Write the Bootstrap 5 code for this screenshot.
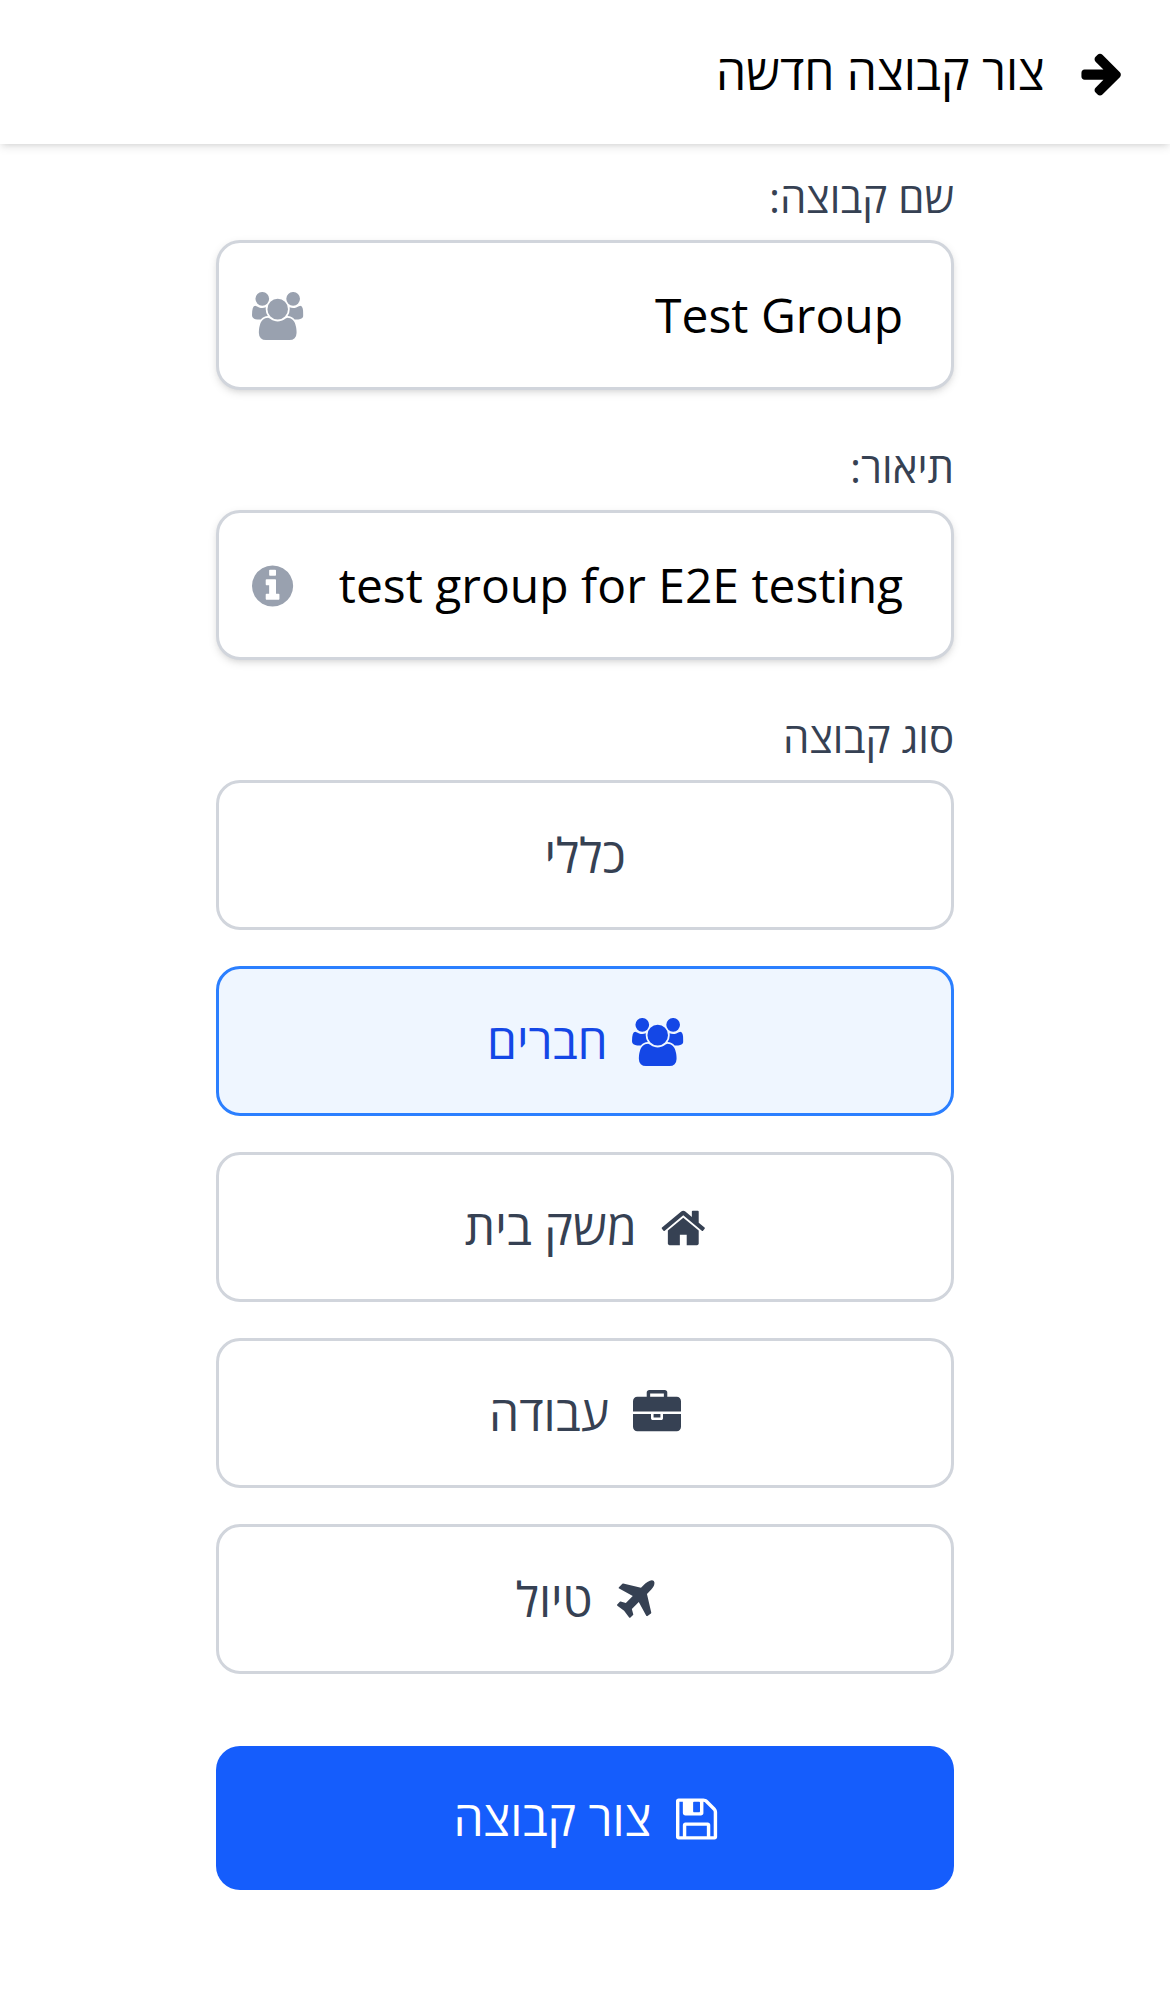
<!DOCTYPE html>
<html lang="he" dir="rtl">
<head>
<meta charset="utf-8">
<meta name="viewport" content="width=device-width, initial-scale=1">
<title>צור קבוצה חדשה</title>
<link rel="stylesheet" href="https://cdn.jsdelivr.net/npm/bootstrap@5.3.0/dist/css/bootstrap.min.css">
<style>
  body { font-family: "Open Sans", "Noto Sans", sans-serif; font-size: 48px; line-height: 72px; color: #000; background: #fff; }
  .app-header { height: 144px; padding: 0 48px; gap: 36px; box-shadow: 0 3px 9px rgba(0,0,0,.1), 0 3px 6px -3px rgba(0,0,0,.1); }
  .app-title { font-size: 48px; line-height: 72px; }
  .glyph { height: 48px; width: auto; fill: currentColor; flex: none; display: block; overflow: visible; }
  .group-form { width: 63.1%; padding: 24px 0 96px; }
  .field-block { margin-bottom: 48px; }
  .field-label { display: block; margin: 0 0 14px; font-size: 42px; line-height: 58px; color: #364153; }
  .field-box { height: 150px; border: 3px solid #d1d5dc; border-radius: 24px; padding: 0 48px 2px 120px; font-size: 48px; color: #000; box-shadow: 0 3px 9px rgba(0,0,0,.1), 0 3px 6px -3px rgba(0,0,0,.1); }
  .field-icon { position: absolute; left: 36px; top: 51px; color: #99a1af; }
  .kind { height: 150px; border: 3px solid #d1d5dc; border-radius: 24px; gap: 24px; color: #364153; cursor: pointer; }
  .btn-check:checked + .kind { border-color: #2b7fff; background: #eff6ff; color: #1447e6; }
  .kinds { gap: 36px; margin-bottom: 72px; }
  .submit-btn { height: 144px; border: 0; border-radius: 24px; gap: 24px; font-size: 48px; background: #155dfc; color: #fff; }
  .submit-btn:hover { background: #1447e6; color: #fff; }
</style>
</head>
<body>
<svg class="d-none" aria-hidden="true">
  <symbol id="i-users" viewBox="0 0 1920 1792"><path d="M593 896q-162 5-265 128h-134q-82 0-138-40.500t-56-118.500q0-353 124-353 6 0 43.500 21t97.500 42.500 119 21.500q67 0 133-23-5 37-5 66 0 139 81 256zm1071 637q0 120-73 189.500t-194 69.500h-874q-121 0-194-69.500t-73-189.500q0-53 3.500-103.500t14-109 26.500-108.500 43-97.500 62-81 85.500-53.500 111.500-20q10 0 43 21.500t73 48 107 48 135 21.500 135-21.500 107-48 73-48 43-21.500q61 0 111.500 20t85.500 53.500 62 81 43 97.500 26.500 108.500 14 109 3.500 103.500zm-1024-1277q0 106-75 181t-181 75-181-75-75-181 75-181 181-75 181 75 75 181zm704 384q0 159-112.500 271.500t-271.500 112.500-271.500-112.500-112.500-271.500 112.500-271.500 271.500-112.500 271.500 112.500 112.500 271.500zm576 225q0 78-56 118.500t-138 40.500h-134q-103-123-265-128 81-117 81-256 0-29-5-66 66 23 133 23 59 0 119-21.500t97.500-42.500 43.500-21q124 0 124 353zm-128-609q0 106-75 181t-181 75-181-75-75-181 75-181 181-75 181 75 75 181z"/></symbol>
</svg>

<header class="app-header d-flex align-items-center bg-white">
  <a href="#" class="text-reset" aria-label="חזרה"><svg class="glyph" viewBox="112 -37 1536 1792"><path d="M1600 960q0 54-37 91l-651 651q-39 37-91 37-51 0-90-37l-75-75q-38-38-38-91t38-91l293-293h-704q-52 0-84.500-37.500t-32.500-90.500v-128q0-53 32.500-90.500t84.500-37.500h704l-293-294q-38-36-38-90t38-90l75-75q38-38 90-38 53 0 91 38l651 651q37 35 37 90z"/></svg></a>
  <h1 class="app-title m-0 fw-normal">צור קבוצה חדשה</h1>
</header>

<form class="group-form mx-auto">
  <div class="field-block">
    <label class="field-label" for="g-name">שם קבוצה:</label>
    <div class="position-relative">
      <input id="g-name" type="text" class="form-control field-box" value="Test Group">
      <svg class="glyph field-icon" viewBox="0 -37 1920 1792"><use href="#i-users" width="1920" height="1792"/></svg>
    </div>
  </div>
  <div class="field-block">
    <label class="field-label" for="g-desc">תיאור:</label>
    <div class="position-relative">
      <input id="g-desc" type="text" class="form-control field-box" value="test group for E2E testing">
      <svg class="glyph field-icon" viewBox="128 -37 1536 1792"><path d="M1152 1376v-160q0-14-9-23t-23-9h-96v-512q0-14-9-23t-23-9h-320q-14 0-23 9t-9 23v160q0 14 9 23t23 9h96v320h-96q-14 0-23 9t-9 23v160q0 14 9 23t23 9h448q14 0 23-9t9-23zm-128-896v-160q0-14-9-23t-23-9h-192q-14 0-23 9t-9 23v160q0 14 9 23t23 9h192q14 0 23-9t9-23zm640 416q0 209-103 385.500t-279.500 279.500-385.500 103-385.500-103-279.500-279.500-103-385.500 103-385.500 279.500-279.500 385.500-103 385.500 103 279.500 279.500 103 385.500z"/></svg>
    </div>
  </div>
  <fieldset>
    <legend class="field-label">סוג קבוצה</legend>
    <div class="kinds d-flex flex-column">
      <div>
        <input class="btn-check" type="radio" name="kind" id="k-general">
        <label class="kind d-flex align-items-center justify-content-center" for="k-general">כללי</label>
      </div>
      <div>
        <input class="btn-check" type="radio" name="kind" id="k-friends" checked>
        <label class="kind d-flex align-items-center justify-content-center" for="k-friends"><svg class="glyph" viewBox="0 -37 1920 1792"><use href="#i-users" width="1920" height="1792"/></svg>חברים</label>
      </div>
      <div>
        <input class="btn-check" type="radio" name="kind" id="k-home">
        <label class="kind d-flex align-items-center justify-content-center" for="k-home"><svg class="glyph" viewBox="64 -37 1664 1792"><path d="M1472 992v480q0 26-19 45t-45 19h-384v-384h-256v384h-384q-26 0-45-19t-19-45v-480q0-1 .5-3t.5-3l575-474 575 474q1 2 1 6zm223-69l-62 74q-8 9-21 11h-3q-13 0-21-7l-692-577-692 577q-12 8-24 7-13-2-21-11l-62-74q-8-10-7-23.500t11-21.500l719-599q32-26 76-26t76 26l244 204v-195q0-14 9-23t23-9h192q14 0 23 9t9 23v408l219 182q10 8 11 21.500t-7 23.500z"/></svg>משק בית</label>
      </div>
      <div>
        <input class="btn-check" type="radio" name="kind" id="k-work">
        <label class="kind d-flex align-items-center justify-content-center" for="k-work"><svg class="glyph" viewBox="0 -37 1792 1792"><path d="M640 256h512v-128h-512v128zm1152 640v480q0 66-47 113t-113 47h-1472q-66 0-113-47t-47-113v-480h672v160q0 26 19 45t45 19h320q26 0 45-19t19-45v-160h672zm-768 0v128h-256v-128h256zm768-480v384h-1792v-384q0-66 47-113t113-47h352v-160q0-40 28-68t68-28h576q40 0 68 28t28 68v160h352q66 0 113 47t47 113z"/></svg>עבודה</label>
      </div>
      <div>
        <input class="btn-check" type="radio" name="kind" id="k-trip">
        <label class="kind d-flex align-items-center justify-content-center" for="k-trip"><svg class="glyph" viewBox="192 0 1408 1792"><path d="M1568 224q44 52 12 148t-108 172l-161 161 160 696q5 19-12 33l-128 96q-7 6-19 6-4 0-7-1-15-3-21-16l-279-508-259 259 53 194q5 17-8 31l-96 96q-9 9-23 9h-2q-15-2-24-13l-189-252-252-189q-11-7-13-23-1-13 9-25l96-97q9-9 23-9 6 0 8 1l194 53 259-259-508-279q-14-8-17-24-2-16 9-27l128-128q14-13 30-8l665 159 160-160q76-76 172-108t148 12z"/></svg>טיול</label>
      </div>
    </div>
  </fieldset>
  <button type="submit" class="btn submit-btn w-100 d-flex align-items-center justify-content-center"><svg class="glyph" viewBox="91 -37 1536 1792"><path d="M512 1536h768v-384h-768v384zm896 0h128v-896q0-14-10-38.500t-20-34.500l-281-281q-10-10-34-20t-39-10v416q0 40-28 68t-68 28h-576q-40 0-68-28t-28-68v-416h-128v1280h128v-416q0-40 28-68t68-28h832q40 0 68 28t28 68v416zm-384-928v-320q0-13-9.500-22.500t-22.500-9.500h-192q-13 0-22.500 9.500t-9.500 22.500v320q0 13 9.500 22.500t22.500 9.500h192q13 0 22.500-9.500t9.500-22.500zm640 32v928q0 40-28 68t-68 28h-1344q-40 0-68-28t-28-68v-1344q0-40 28-68t68-28h928q40 0 88 20t76 48l280 280q28 28 48 76t20 88z"/></svg>צור קבוצה</button>
</form>
<script src="https://cdn.jsdelivr.net/npm/bootstrap@5.3.0/dist/js/bootstrap.bundle.min.js"></script>
</body>
</html>
